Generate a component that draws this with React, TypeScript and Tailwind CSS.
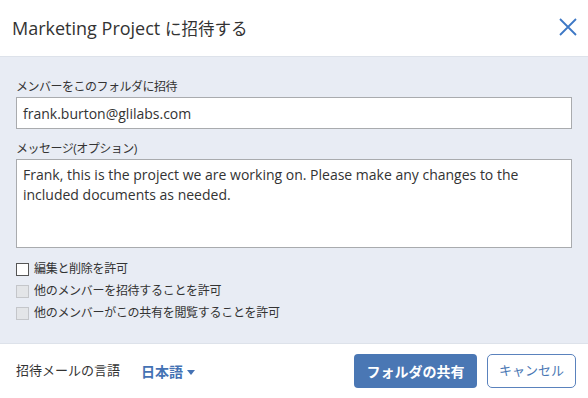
import React from 'react';

const latin = "font-['Open_Sans','Noto_Sans_CJK_JP',sans-serif]";

const CheckRow: React.FC<{ label: string; disabled?: boolean }> = ({ label, disabled }) => (
  <label className="flex items-center h-[22px] text-[12px] tracking-[-0.3px] text-[#333]">
    <span
      className={`w-[13px] h-[13px] border ${
        disabled ? 'bg-[#e3e5e8] border-[#c4c6ca]' : 'bg-white border-[#555]'
      }`}
    />
    <span className="ml-[5px]">{label}</span>
  </label>
);

const App: React.FC = () => {
  return (
    <div className={`w-[588px] h-[398px] bg-white flex flex-col ${latin}`}>
      {/* Header */}
      <div className="h-[57px] flex items-center justify-between pl-[12px] pr-[11px] border-b border-[#dde2ea]">
        <h1 className="text-[18px] text-[#333] pt-[1px]">
          Marketing Project <span className="text-[16.5px]">に招待する</span>
        </h1>
        <svg width="18" height="18" viewBox="0 0 18 18" className="mt-[-2px]">
          <path d="M1 1 L17 17 M17 1 L1 17" stroke="#3d78c5" strokeWidth="1.8" />
        </svg>
      </div>

      {/* Body */}
      <div className="flex-1 bg-[#e8ecf4] px-[16px] pt-[22px]">
        <div className="text-[12px] tracking-[-0.5px] leading-[16px] text-[#333] mb-[2px]">メンバーをこのフォルダに招待</div>
        <div className="h-[32px] bg-white border border-[#a9abae] flex items-center pl-[6px] text-[14px] text-[#333]">
          frank.burton@glilabs.com
        </div>

        <div className="text-[12px] tracking-[-0.5px] leading-[16px] text-[#333] mt-[12px] mb-[2px]">メッセージ(オプション)</div>
        <div className="h-[89px] bg-white border border-[#a9abae] px-[6px] pt-[5px] text-[14px] leading-[20px] text-[#333]">
          Frank, this is the project we are working on. Please make any changes to the included documents as needed.
        </div>

        <div className="mt-[10px]">
          <CheckRow label="編集と削除を許可" />
          <CheckRow label="他のメンバーを招待することを許可" disabled />
          <CheckRow label="他のメンバーがこの共有を閲覧することを許可" disabled />
        </div>
      </div>

      {/* Footer */}
      <div className="h-[55px] border-t border-[#dde2ea] flex items-center pl-[16px] pr-[12px]">
        <span className="text-[13px] text-[#333]">招待メールの言語</span>
        <span className="ml-[21px] text-[14px] font-bold text-[#4472b4] flex items-center">
          日本語
          <svg width="8" height="5" viewBox="0 0 8 5" className="ml-[4px] mt-[2px]">
            <path d="M0 0 H8 L4 5 Z" fill="#4472b4" />
          </svg>
        </span>
        <div className="flex-1" />
        <button className="h-[34px] w-[123px] rounded-[4px] bg-[#4a77b4] text-white text-[14px] font-bold">
          フォルダの共有
        </button>
        <button className="ml-[10px] h-[34px] w-[89px] rounded-[5px] border border-[#5a82bd] bg-white text-[#4a77b4] text-[13px]">
          キャンセル
        </button>
      </div>
    </div>
  );
};

export default App;
